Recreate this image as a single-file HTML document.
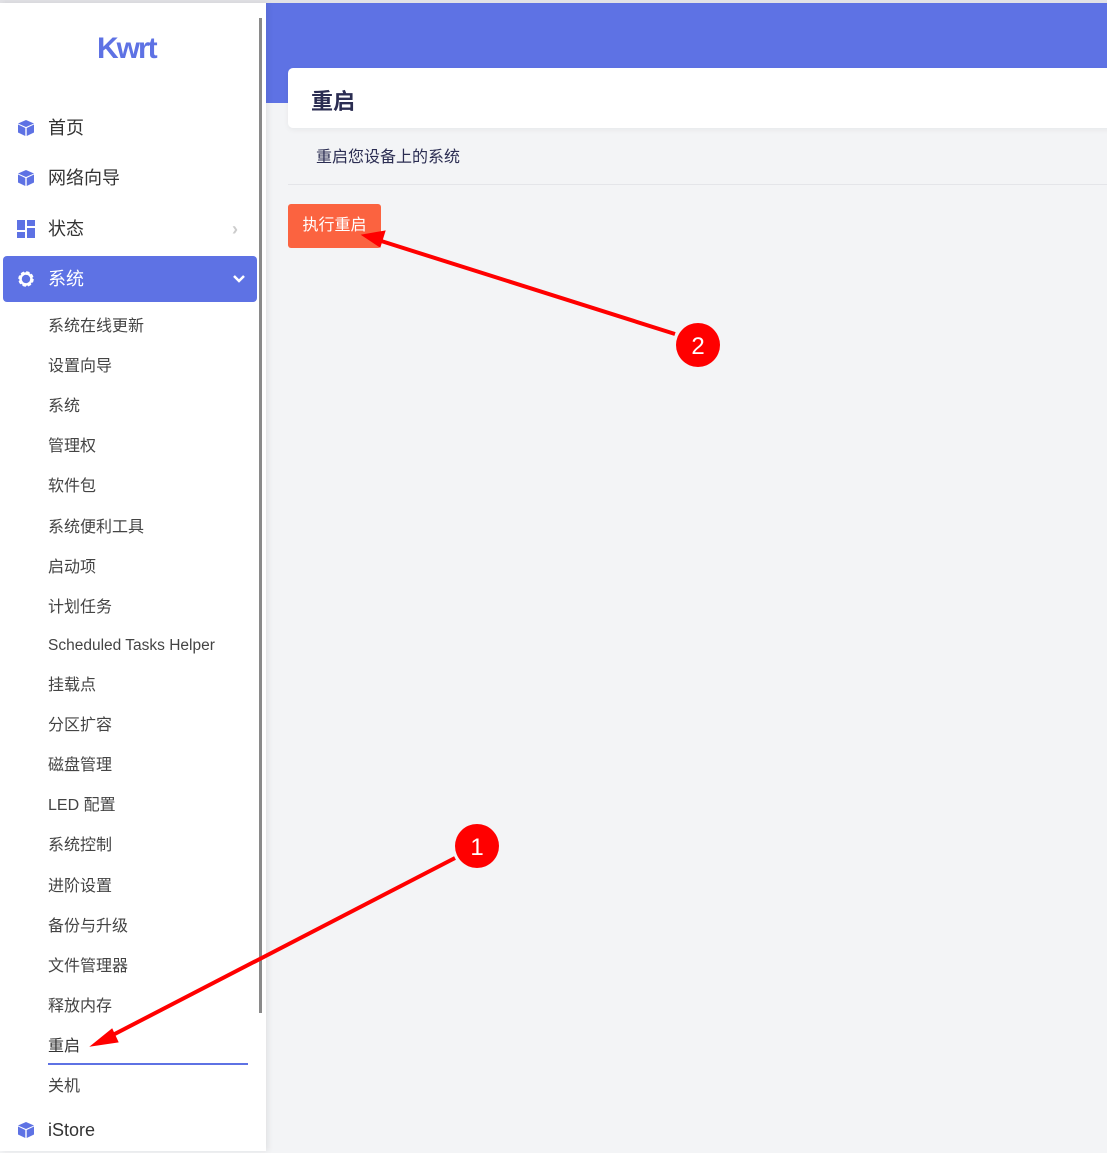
<!DOCTYPE html>
<html><head><meta charset="utf-8"><style>
*{margin:0;padding:0;box-sizing:border-box}
body{width:1107px;height:1151px;overflow:hidden;background:#f3f4f6;font-family:"Liberation Sans","Noto Sans CJK SC",sans-serif;position:relative}
.topline{position:absolute;left:0;top:0;width:1107px;height:3px;background:#e2e2e6}
.side{position:absolute;left:0;top:3px;width:266px;height:1148px;background:#fff;box-shadow:2px 0 6px rgba(0,0,0,.08)}
.scroll{position:absolute;left:259px;top:18px;width:3px;height:995px;background:#8a8a8a}
.logo{position:absolute;left:97px;top:29px;font-size:30px;font-weight:bold;color:#5e72e4;letter-spacing:-2px}
.item{position:absolute;left:0;width:257px;height:46px;font-size:18px;color:#333;line-height:46px}
.item .t{position:absolute;left:48px}
.item svg{position:absolute;left:17px;top:14px}
.act{left:3px;width:254px;background:#5e72e4;color:#fff;border-radius:4px}
.sub{position:absolute;left:48px;font-size:16px;color:#444;margin-top:-2px}
.main-top{position:absolute;left:266px;top:3px;width:841px;height:100px;background:#5e72e4}
.card{position:absolute;left:288px;top:68px;width:830px;height:60px;background:#fff;border-radius:5px;box-shadow:0 2px 6px rgba(0,0,0,.05)}
.card span{position:absolute;left:23px;top:16px;font-size:22px;font-weight:bold;color:#2b2d52}
.desc{position:absolute;left:316px;top:143px;font-size:16px;color:#2b2d52}
.hr{position:absolute;left:288px;top:184px;width:819px;height:1px;background:#e4e5e9}
.btn{position:absolute;left:288px;top:204px;width:93px;height:44px;background:#fb6340;color:#fff;border-radius:3px;font-size:16px;line-height:44px;text-align:center}
</style></head><body>
<div class="topline"></div>
<div class="main-top"></div>
<div class="card"><span>重启</span></div>
<div class="desc">重启您设备上的系统</div>
<div class="hr"></div>
<div class="btn">执行重启</div>
<div class="side">
<div class="logo">Kwrt</div>
<div class="item" style="top:102px"><svg width="18" height="18" viewBox="0 0 18 18"><path d="M9 1L17 4.5 9 8 1 4.5z M1 5.5L8.3 9v8L1 13.5z M17 5.5L9.7 9v8L17 13.5z" fill="#5e72e4"/></svg><span class="t">首页</span></div>
<div class="item" style="top:152px"><svg width="18" height="18" viewBox="0 0 18 18"><path d="M9 1L17 4.5 9 8 1 4.5z M1 5.5L8.3 9v8L1 13.5z M17 5.5L9.7 9v8L17 13.5z" fill="#5e72e4"/></svg><span class="t">网络向导</span></div>
<div class="item" style="top:203px"><svg width="18" height="18" viewBox="0 0 18 18"><path d="M0 0h8v10H0zM10 0h8v6h-8zM10 8h8v10h-8zM0 12h8v6H0z" fill="#5e72e4"/></svg><span class="t">状态</span><span style="position:absolute;left:232px;color:#ccc;font-size:18px;font-weight:bold">›</span></div>
<div class="item act" style="top:253px"><svg width="18" height="18" viewBox="0 0 18 18" style="left:14px"><circle cx="9" cy="9" r="6" fill="none" stroke="#fff" stroke-width="3.5" stroke-dasharray="3 1.7"/><circle cx="9" cy="9" r="5.5" fill="none" stroke="#fff" stroke-width="2.5"/></svg><span class="t" style="left:45px">系统</span><svg width="14" height="10" viewBox="0 0 14 10" style="left:229px;top:18px"><path d="M2 2l5 5 5-5" fill="none" stroke="#fff" stroke-width="2.5"/></svg></div>
<div class="sub" style="top:311px">系统在线更新</div>
<div class="sub" style="top:351px">设置向导</div>
<div class="sub" style="top:391px">系统</div>
<div class="sub" style="top:431px">管理权</div>
<div class="sub" style="top:471px">软件包</div>
<div class="sub" style="top:512px">系统便利工具</div>
<div class="sub" style="top:552px">启动项</div>
<div class="sub" style="top:592px">计划任务</div>
<div class="sub" style="top:636px;font-size:15.5px">Scheduled Tasks Helper</div>
<div class="sub" style="top:670px">挂载点</div>
<div class="sub" style="top:710px">分区扩容</div>
<div class="sub" style="top:750px">磁盘管理</div>
<div class="sub" style="top:790px">LED 配置</div>
<div class="sub" style="top:830px">系统控制</div>
<div class="sub" style="top:871px">进阶设置</div>
<div class="sub" style="top:911px">备份与升级</div>
<div class="sub" style="top:951px">文件管理器</div>
<div class="sub" style="top:991px">释放内存</div>
<div class="sub" style="top:1031px;color:#333">重启</div>
<div style="position:absolute;left:48px;top:1060px;width:200px;height:2px;background:#5e72e4"></div>
<div class="sub" style="top:1071px">关机</div>
<div class="item" style="top:1104px"><svg width="18" height="18" viewBox="0 0 18 18"><path d="M9 1L17 4.5 9 8 1 4.5z M1 5.5L8.3 9v8L1 13.5z M17 5.5L9.7 9v8L17 13.5z" fill="#5e72e4"/></svg><span class="t">iStore</span></div>
</div>
<div class="scroll"></div>
<svg style="position:absolute;left:0;top:0" width="1107" height="1151">
<g stroke="#f00" stroke-width="4" fill="#f00">
<line x1="455" y1="858" x2="105" y2="1039"/>
<path d="M91 1046L112 1029 118 1042z" stroke-width="1"/>
<line x1="675" y1="334" x2="378" y2="240"/>
<path d="M362 235L385 231 380 247z" stroke-width="1"/>
</g>
<circle cx="477" cy="846" r="22" fill="#f00"/>
<text x="477" y="855" font-size="24" fill="#fff" text-anchor="middle" font-family="Liberation Sans">1</text>
<circle cx="698" cy="345" r="22" fill="#f00"/>
<text x="698" y="354" font-size="24" fill="#fff" text-anchor="middle" font-family="Liberation Sans">2</text>
</svg>
</body></html>
